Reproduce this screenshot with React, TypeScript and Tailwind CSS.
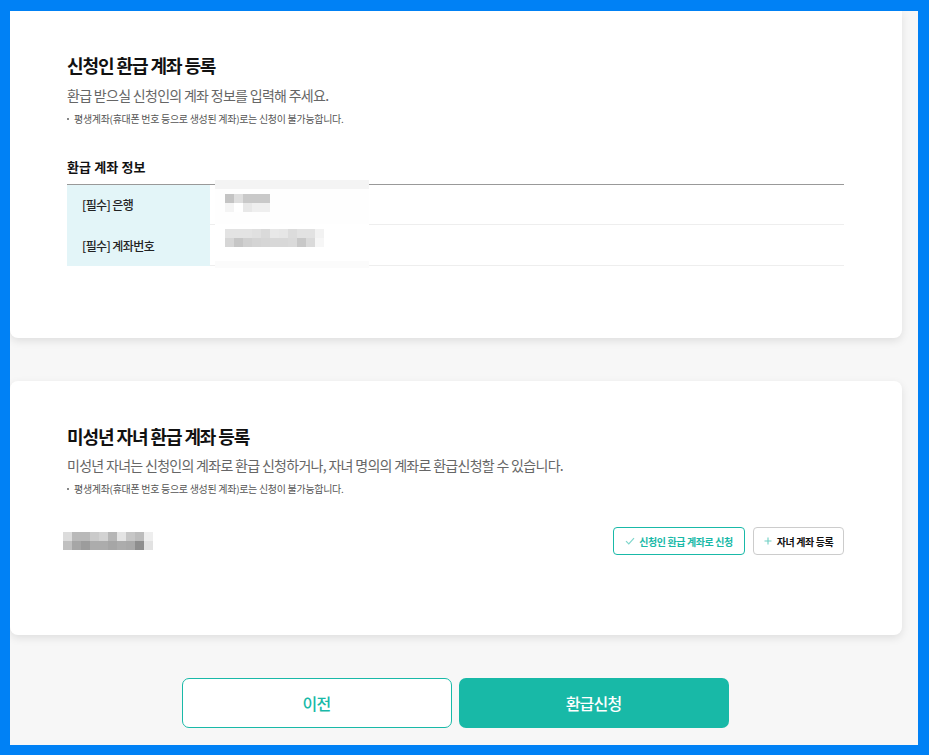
const FONT = { fontFamily: '"Noto Sans CJK KR", "Noto Sans", sans-serif' };

const bankBlocks = [
  ['#c4c4c4', '#dedede', '#c9c9c9', '#c9c9c9', '#c9c9c9'],
  ['#f4f4f4', '#ffffff', '#e8e8e8', '#efefef', '#efefef'],
];

const accountBlocks = [
  ['#e3e3e3', '#e3e3e3', '#e3e3e3', '#e0e0e0', '#dadada', '#e8e8e8', '#e6e6e6', '#dcdcdc', '#e2e2e2', '#e2e2e2', '#f2f2f2'],
  ['#d6d6d6', '#c6c6c6', '#d0d0d0', '#d4d4d4', '#d6d6d6', '#d8d8d8', '#d8d8d8', '#dadada', '#c8c8c8', '#dadada', '#f6f6f6'],
];

const nameBlocks = [
  ['#dcdcdc', '#b9b9b9', '#b9b9b9', '#cacaca', '#d2d2d2', '#b6b6b6', '#e4e4e4', '#c6c6c6', '#bcbcbc', '#eeeeee'],
  ['#c0c0c0', '#a6a6a6', '#9c9c9c', '#acacac', '#acacac', '#a6a6a6', '#acacac', '#a9a9a9', '#8e8e8e', '#e2e2e2'],
];

function Pixelated({ rows }: { rows: string[][] }) {
  return (
    <div className="flex flex-col">
      {rows.map((row, i) => (
        <div key={i} className="flex">
          {row.map((c, j) => (
            <div key={j} className="h-[9px] w-[9px]" style={{ backgroundColor: c }} />
          ))}
        </div>
      ))}
    </div>
  );
}

function Note() {
  return (
    <p className="mt-[7px] flex items-center text-[10px] leading-[14px] tracking-[-0.03em] text-[#555]">
      <span className="mr-[5px] inline-block h-[2px] w-[2px] bg-[#888]" />
      평생계좌(휴대폰 번호 등으로 생성된 계좌)로는 신청이 불가능합니다.
    </p>
  );
}

export default function App() {
  return (
    <div className="h-[755px] w-[929px] bg-[#0081f5] pt-[11px] pl-[10px] pr-[11px] pb-[10px]" style={FONT}>
      <div className="h-full w-full overflow-hidden bg-[#f7f7f7]">
        <div className="w-[892px]">
          {/* 신청인 환급 계좌 등록 */}
          <section className="rounded-b-[8px] bg-white pl-[57px] pr-[58px] pt-[41px] pb-[72px] shadow-[0_3px_8px_rgba(0,0,0,0.1)]">
            <h2 className="text-[18px] font-bold leading-[26px] tracking-[-0.06em] text-[#111]">신청인 환급 계좌 등록</h2>
            <p className="mt-[7px] text-[14px] leading-[20px] tracking-[-0.05em] text-[#666]">
              환급 받으실 신청인의 계좌 정보를 입력해 주세요.
            </p>
            <Note />

            <h3 className="mt-[32px] text-[13px] font-bold leading-[18px] tracking-[0.01em] text-[#111]">환급 계좌 정보</h3>
            <div className="relative mt-[8px] border-t border-[#999]">
              <div className="flex">
                <div className="flex h-[40px] w-[143px] items-center bg-[#e3f5f8] pl-[15px] text-[12px] font-medium tracking-[-0.05em] text-[#222]">
                  [필수] 은행
                </div>
                <div className="flex-1 border-b border-[#eee]" />
              </div>
              <div className="flex">
                <div className="flex h-[41px] w-[143px] items-center bg-[#e3f5f8] pl-[15px] text-[12px] font-medium tracking-[-0.05em] text-[#222]">
                  [필수] 계좌번호
                </div>
                <div className="flex-1 border-b border-[#eee]" />
              </div>

              {/* value overlay */}
              <div className="absolute top-[-5px] left-[148px] flex h-[88px] w-[154px] flex-col bg-white">
                <div className="h-[9px] bg-[#f4f4f4]" />
                <div className="flex h-[35px] items-start bg-[#fefefe] pt-[5px] pl-[10px]">
                  <Pixelated rows={bankBlocks} />
                </div>
                <div className="flex h-[37px] items-start pt-[5px] pl-[10px]">
                  <Pixelated rows={accountBlocks} />
                </div>
                <div className="flex-1 bg-[#fbfbfb]" />
              </div>
            </div>
          </section>

          {/* 미성년 자녀 환급 계좌 등록 */}
          <section className="mt-[43px] rounded-[8px] bg-white pl-[57px] pr-[58px] pt-[42px] pb-[80px] shadow-[0_3px_8px_rgba(0,0,0,0.1)]">
            <h2 className="text-[18px] font-bold leading-[26px] tracking-[-0.06em] text-[#111]">미성년 자녀 환급 계좌 등록</h2>
            <p className="mt-[6px] text-[14px] leading-[20px] tracking-[-0.05em] text-[#666]">
              미성년 자녀는 신청인의 계좌로 환급 신청하거나, 자녀 명의의 계좌로 환급신청할 수 있습니다.
            </p>
            <Note />

            <div className="mt-[31px] flex items-center justify-between">
              <div className="-ml-[4px]">
                <Pixelated rows={nameBlocks} />
              </div>
              <div className="flex gap-[8px]">
                <button className="flex h-[28px] w-[132px] items-center justify-center gap-[4px] rounded-[4px] border border-[#19b9a8] bg-white text-[10px] font-bold tracking-[-0.04em] text-[#19b9a8]">
                  <svg width="10" height="8" viewBox="0 0 10 8" fill="none">
                    <path d="M1 4.2 L3.8 7 L9 1.2" stroke="#7fd6cc" strokeWidth="1.2" />
                  </svg>
                  신청인 환급 계좌로 신청
                </button>
                <button className="flex h-[28px] w-[91px] items-center justify-center gap-[5px] rounded-[4px] border border-[#ccc] bg-white text-[10px] font-bold tracking-[-0.04em] text-[#111]">
                  <svg width="8" height="8" viewBox="0 0 8 8" fill="none">
                    <path d="M4 0.5 V7.5 M0.5 4 H7.5" stroke="#6fcfc4" strokeWidth="1.1" />
                  </svg>
                  자녀 계좌 등록
                </button>
              </div>
            </div>
          </section>

          {/* 하단 버튼 */}
          <div className="mt-[43px] flex justify-center gap-[7px] pr-[2px]">
            <button className="h-[50px] w-[270px] rounded-[7px] border border-[#19b9a8] bg-white text-[16px] font-medium tracking-[-0.05em] text-[#19b9a8]">
              이전
            </button>
            <button className="h-[50px] w-[270px] rounded-[7px] bg-[#18b9a7] text-[16px] font-medium tracking-[-0.05em] text-white">
              환급신청
            </button>
          </div>
        </div>
      </div>
    </div>
  );
}
